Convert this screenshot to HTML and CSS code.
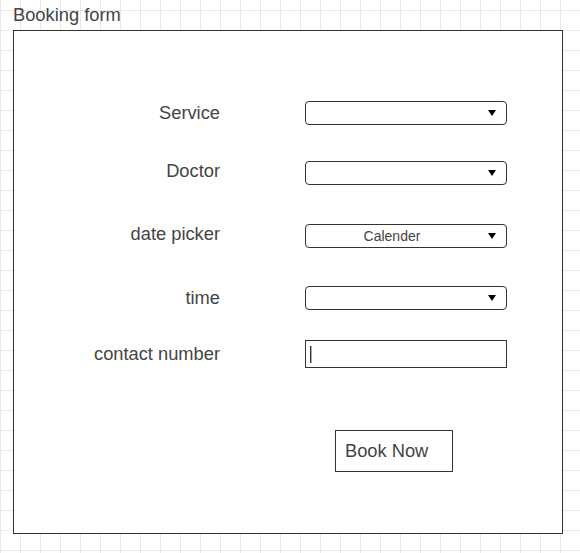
FILE: index.html
```html
<!DOCTYPE html>
<html lang="en">
<head>
  <meta charset="UTF-8">
  <title>Booking form</title>
  <link rel="stylesheet" href="styles.css">
</head>
<body>
  <div class="page">
    <div class="title">Booking form</div>

    <div class="card">
      <div class="row">
        <div class="label">Service</div>
        <div class="select"><span class="select-value"></span><span class="caret"></span></div>
      </div>

      <div class="row row-doctor">
        <div class="label label-up">Doctor</div>
        <div class="select"><span class="select-value"></span><span class="caret"></span></div>
      </div>

      <div class="row row-date">
        <div class="label label-up">date picker</div>
        <div class="select"><span class="select-value">Calender</span><span class="caret"></span></div>
      </div>

      <div class="row row-time">
        <div class="label">time</div>
        <div class="select"><span class="select-value"></span><span class="caret"></span></div>
      </div>

      <div class="row row-contact">
        <div class="label">contact number</div>
        <div class="text-input"><span class="cursor"></span></div>
      </div>

      <div class="actions">
        <button class="book-btn" type="button">Book Now</button>
      </div>
    </div>
  </div>
</body>
</html>
```

FILE: styles.css
```css
html {
  height: 100%;
}
body {
  margin: 0;
  min-height: 100%;
  font-family: 'Liberation Sans', Arial, Helvetica, sans-serif;
  color: #444;
  background-color: #fff;
  background-image:
    linear-gradient(to right, #e8e8e8 1px, transparent 1px),
    linear-gradient(to bottom, #e8e8e8 1px, transparent 1px);
  background-size: 20px 20px;
  background-position: 0 0, 0 10px;
}
.page {
  padding: 5px 0 0 13px;
}
.title {
  font-size: 18.3px;
  line-height: 20px;
  margin-bottom: 5px;
}
.card {
  width: 550px;
  height: 504px;
  box-sizing: border-box;
  border: 1px solid #333;
  background: #fff;
  padding-top: 70px;
}
.row {
  display: flex;
  align-items: center;
}
.row-doctor {
  margin-top: 36px;
}
.row-date {
  margin-top: 39px;
}
.row-time {
  margin-top: 38px;
}
.row-contact {
  margin-top: 30px;
}
.label {
  width: 206px;
  margin-right: 85px;
  text-align: right;
  font-size: 18.3px;
  line-height: 20px;
}
.label-up {
  position: relative;
  top: -2px;
}
.select {
  position: relative;
  display: flex;
  align-items: center;
  width: 202px;
  height: 24px;
  box-sizing: border-box;
  border: 1px solid #333;
  border-radius: 4px;
  padding-right: 28px;
}
.select-value {
  flex: 1;
  text-align: center;
  font-size: 14px;
  line-height: 16px;
}
.caret {
  position: absolute;
  right: 10px;
  top: 8px;
  width: 0;
  height: 0;
  border-left: 4px solid transparent;
  border-right: 4px solid transparent;
  border-top: 6px solid #000;
}
.text-input {
  display: flex;
  align-items: center;
  width: 202px;
  height: 28px;
  box-sizing: border-box;
  border: 1px solid #333;
  padding-left: 4px;
}
.cursor {
  width: 1px;
  height: 17px;
  background: #333;
  box-shadow: 1px 0 0 #aaa;
}
.actions {
  margin-top: 62px;
  padding-left: 321px;
}
.book-btn {
  display: block;
  width: 118px;
  height: 42px;
  box-sizing: border-box;
  margin: 0;
  padding: 0 0 0 9px;
  border: 1px solid #333;
  border-radius: 0;
  background: #fff;
  color: #444;
  font-family: inherit;
  font-size: 18.3px;
  text-align: left;
}
```
